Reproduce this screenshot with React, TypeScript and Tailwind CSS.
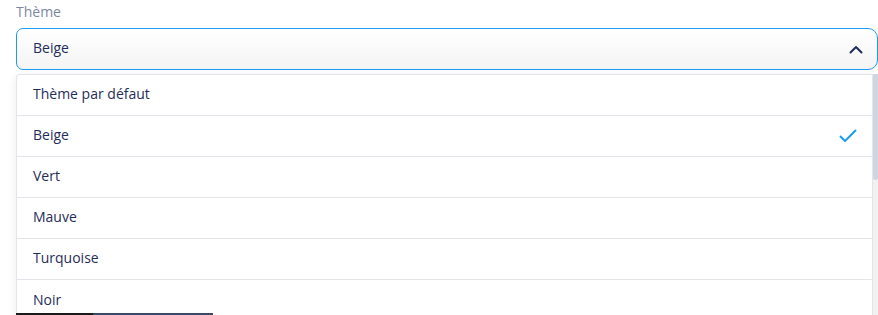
const options = ["Thème par défaut", "Beige", "Vert", "Mauve", "Turquoise", "Noir"];

export default function App() {
  const selected = "Beige";

  return (
    <div
      className="relative h-[315px] w-[878px] overflow-hidden bg-white"
      style={{ fontFamily: "'Open Sans', Lato, sans-serif" }}
    >
      <div className="pl-4 pt-[3px]">
        <p className="text-[14px] leading-[18px] text-[#7c87a0]">Thème</p>

        <button
          type="button"
          className="mt-[7px] flex h-[42px] w-[862px] items-center justify-between rounded-l-[7px] rounded-r-[10px] border border-[#1b9cf2] bg-gradient-to-b from-white to-[#f4f4f5] pb-[3px] pl-4 pr-[14px] text-left"
        >
          <span className="text-[14px] font-medium text-[#1f2d5a]">{selected}</span>
          <svg width="14" height="10" viewBox="0 0 14 10" fill="none" className="mt-[2px]">
            <path
              d="M1.5 8.5L7 3L12.5 8.5"
              stroke="#1f2d5a"
              strokeWidth="2"
              strokeLinecap="round"
              strokeLinejoin="round"
            />
          </svg>
        </button>

        <div className="mt-1 flex w-[862px]">
          <ul className="w-[857px] rounded-tl-[4px] border-l border-t border-r border-[#e2e5ea] bg-white shadow-[0_2px_10px_rgba(0,0,0,0.08)]">
            {options.map((opt, i) => (
              <li
                key={opt}
                className={`flex h-[41px] items-center justify-between pl-4 pr-[15px] text-[14px] font-medium text-[#1f2d5a] ${
                  i < options.length - 1 ? "border-b border-[#e2e5ea]" : ""
                }`}
              >
                <span className="-mt-[3px]">{opt}</span>
                {opt === selected && (
                  <svg width="18" height="14" viewBox="0 0 18 14" fill="none">
                    <path
                      d="M1.5 7.5L6 12L16.5 1.5"
                      stroke="#1b9cf2"
                      strokeWidth="2"
                      strokeLinecap="round"
                      strokeLinejoin="round"
                    />
                  </svg>
                )}
              </li>
            ))}
          </ul>
          <div className="w-[5px] bg-[#f1f1f1]">
            <div className="h-[106px] rounded-b-sm bg-[#cfd6e1]" />
          </div>
        </div>
      </div>

      <div className="absolute bottom-0 left-4 flex h-[2px] w-[200px]">
        <div className="w-[77px] bg-[#1a1a1a]" />
        <div className="w-[120px] bg-[#3b4a6b]" />
      </div>
    </div>
  );
}
